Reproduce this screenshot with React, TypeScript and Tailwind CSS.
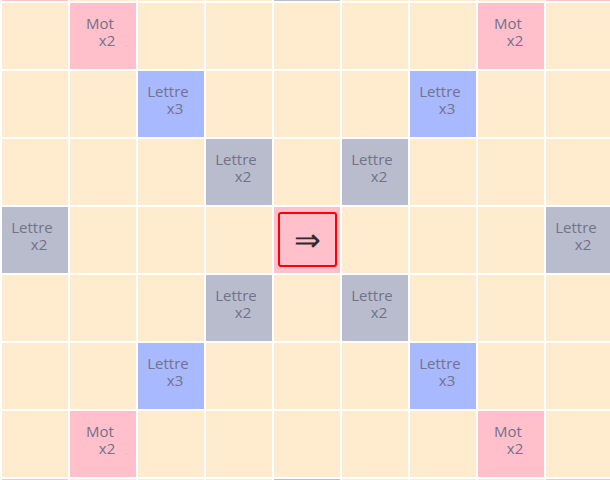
type Bonus = "TW" | "DW" | "TL" | "DL" | "";

const TW = ["0,0", "0,7", "0,14", "7,0", "7,14", "14,0", "14,7", "14,14"];
const DW = [
  "1,1", "2,2", "3,3", "4,4", "1,13", "2,12", "3,11", "4,10",
  "13,1", "12,2", "11,3", "10,4", "13,13", "12,12", "11,11", "10,10", "7,7",
];
const TL = ["1,5", "1,9", "5,1", "5,5", "5,9", "5,13", "9,1", "9,5", "9,9", "9,13", "13,5", "13,9"];
const DL = [
  "0,3", "0,11", "2,6", "2,8", "3,0", "3,7", "3,14", "6,2", "6,6", "6,8", "6,12",
  "7,3", "7,11", "8,2", "8,6", "8,8", "8,12", "11,0", "11,7", "11,14", "12,6", "12,8", "14,3", "14,11",
];

function bonusAt(r: number, c: number): Bonus {
  const k = `${r},${c}`;
  if (TW.includes(k)) return "TW";
  if (DW.includes(k)) return "DW";
  if (TL.includes(k)) return "TL";
  if (DL.includes(k)) return "DL";
  return "";
}

const styles: Record<Bonus, { bg: string; top: string; bottom: string }> = {
  TW: { bg: "bg-[#ff8f8f]", top: "Mot", bottom: "x3" },
  DW: { bg: "bg-[#ffc0cb]", top: "Mot", bottom: "x2" },
  TL: { bg: "bg-[#a9b9ff]", top: "Lettre", bottom: "x3" },
  DL: { bg: "bg-[#b9bccc]", top: "Lettre", bottom: "x2" },
  "": { bg: "bg-[#ffebcd]", top: "", bottom: "" },
};

function Cell({ r, c }: { r: number; c: number }) {
  const b = bonusAt(r, c);
  const s = styles[b];
  const center = r === 7 && c === 7;

  if (center) {
    // case de départ, sélectionnée
    return (
      <div className={`w-[66px] h-[66px] ${s.bg} pt-[5px] pl-[4px] pr-[3px] pb-[6px]`}>
        <div className="h-full w-full border-2 border-[#ff0000] rounded-[3px] flex items-center justify-center text-[32px] leading-none font-extralight text-[#2b2b2b] font-['DejaVu_Sans',sans-serif]">
          ⇒
        </div>
      </div>
    );
  }

  return (
    <div className={`w-[66px] h-[66px] ${s.bg} pt-[12px] text-[15px] leading-[17px] text-[#72728a] font-['Open_Sans',sans-serif]`}>
      {b && (
        <>
          <div className="text-center pr-[5px]">{s.top}</div>
          <div className="text-center pl-[9px]">{s.bottom}</div>
        </>
      )}
    </div>
  );
}

export default function App() {
  const rows = Array.from({ length: 15 }, (_, i) => i);

  return (
    <div className="w-screen h-screen overflow-hidden bg-white flex items-center justify-center">
      <div className="shrink-0 grid grid-cols-[repeat(15,66px)] gap-[2px] pl-[3px] bg-white">
        {rows.map((r) =>
          rows.map((c) => <Cell key={`${r}-${c}`} r={r} c={c} />)
        )}
      </div>
    </div>
  );
}
